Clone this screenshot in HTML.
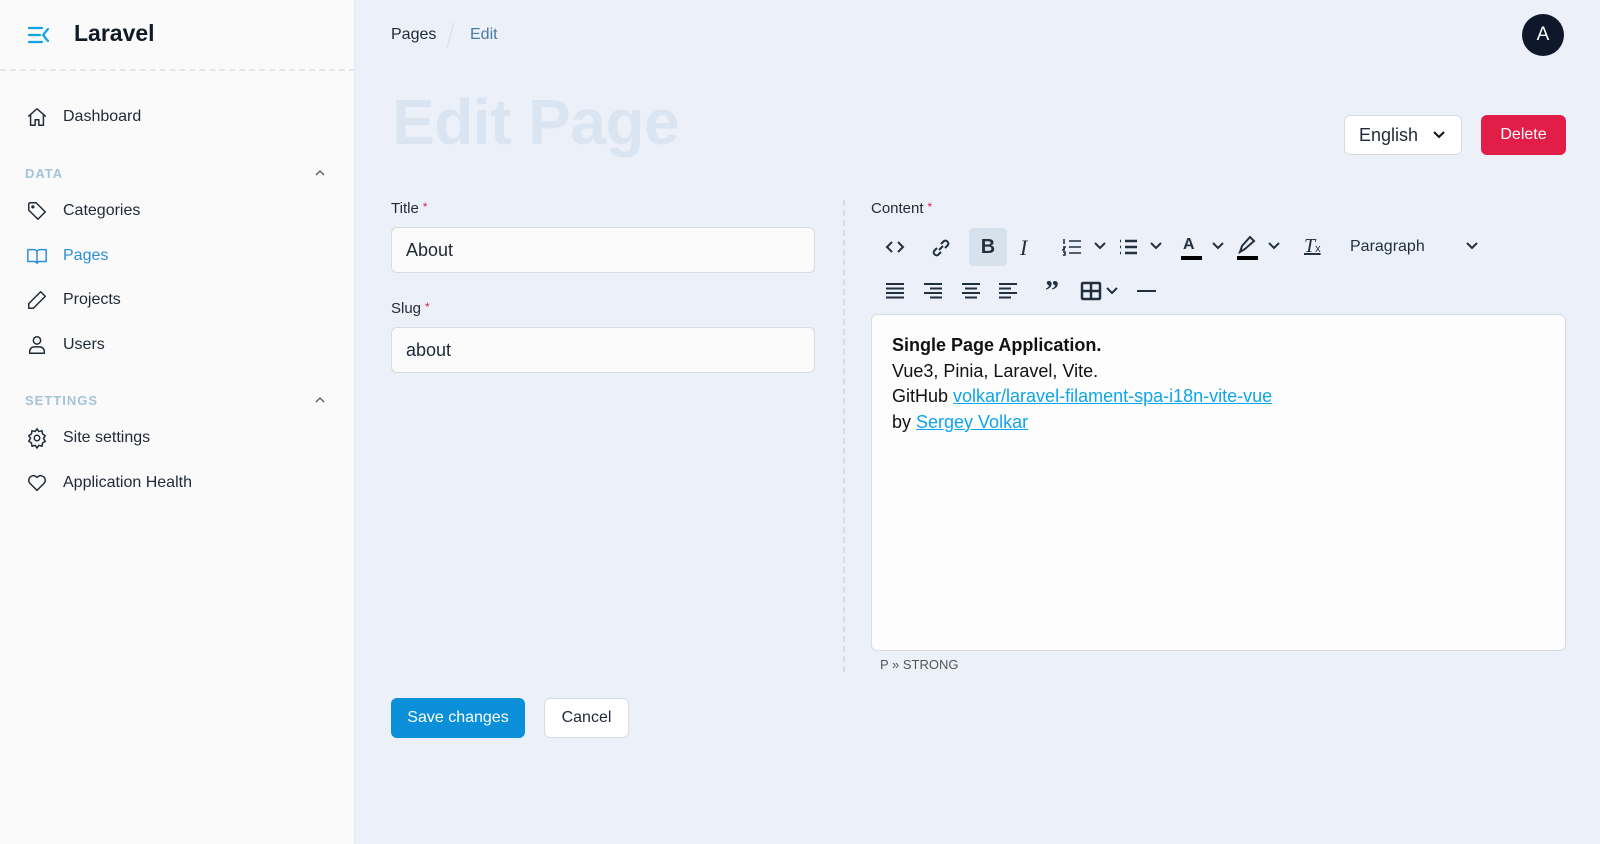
<!DOCTYPE html>
<html><head><meta charset="utf-8"><style>
*{box-sizing:border-box;margin:0;padding:0}
body{width:1600px;height:844px;overflow:hidden;font-family:"Liberation Sans",sans-serif;background:#ecf1f9;position:relative;color:#1f2937}
.sb{position:absolute;left:0;top:0;width:355px;height:844px;background:#fafafa;border-right:1px solid #e5e9f0}
.abs{position:absolute}
.nav{position:absolute;left:26px;display:flex;align-items:center;font-size:16px;color:#1f2937}
.nav svg{width:22px;height:22px;margin-right:15px;fill:none;stroke:#1f2937;stroke-width:1.6;stroke-linecap:round;stroke-linejoin:round}
.sec{position:absolute;left:25px;font-size:13px;font-weight:bold;letter-spacing:1px;color:#a5c3d8}
.chev{position:absolute;left:315px;width:10px;height:10px}
.inp{position:absolute;background:#fbfbfc;border:1px solid #d7dce3;border-radius:6px;font-size:18px;padding-left:14px;display:flex;align-items:center}
.lbl{position:absolute;font-size:15px}
.lbl b{color:#e11d48;font-weight:normal;font-size:12px;vertical-align:top;margin-left:4px}
.tb svg{position:absolute;fill:none;stroke:#222f3e;stroke-width:2}
</style></head><body>
<div class="sb">
 <svg class="abs" style="left:27px;top:25px" width="24" height="20" viewBox="0 0 24 20" fill="none" stroke="#0ea5e9" stroke-width="2.2" stroke-linecap="round"><path d="M2 3h13M2 10h11M2 17h13M21 4l-5 6 5 6"/></svg>
 <div class="abs" style="left:74px;top:20px;font-size:23px;font-weight:bold;color:#111827">Laravel</div>
 <div class="abs" style="left:0;top:69px;width:355px;border-top:2px dashed #e4e8ee"></div>
 <div class="nav" style="top:106px"><svg viewBox="0 0 24 24"><path d="M3 11l9-8 9 8M5 9v12h5v-6h4v6h5V9"/></svg>Dashboard</div>
 <div class="sec" style="top:166px">DATA</div>
 <svg class="chev" style="top:168px" viewBox="0 0 10 10" fill="none" stroke="#555" stroke-width="1.3"><path d="M1 7l4-4 4 4"/></svg>
 <div class="nav" style="top:200px"><svg viewBox="0 0 24 24"><path d="M3 4v7l10 10 8-8L11 3H4z"/><circle cx="7.5" cy="7.5" r="1"/></svg>Categories</div>
 <div class="nav" style="top:245px;color:#2b8ed8"><svg viewBox="0 0 24 24" style="stroke:#2b8ed8"><path d="M2 5h7a3 3 0 013 3v12a3 3 0 00-3-2H2zM22 5h-7a3 3 0 00-3 3v12a3 3 0 013-2h7z"/></svg>Pages</div>
 <div class="nav" style="top:289px"><svg viewBox="0 0 24 24"><path d="M16 3l5 5L8 21H3v-5z"/></svg>Projects</div>
 <div class="nav" style="top:334px"><svg viewBox="0 0 24 24"><circle cx="12" cy="7" r="4"/><path d="M4 21v-2a5 5 0 015-5h6a5 5 0 015 5v2z"/></svg>Users</div>
 <div class="sec" style="top:393px">SETTINGS</div>
 <svg class="chev" style="top:395px" viewBox="0 0 10 10" fill="none" stroke="#555" stroke-width="1.3"><path d="M1 7l4-4 4 4"/></svg>
 <div class="nav" style="top:427px"><svg viewBox="0 0 24 24"><circle cx="12" cy="12" r="3"/><path d="M12 2l2 3 3.5-1 .5 3.5 3 2-2 3 2 3-3 2-.5 3.5L14 20l-2 3-2-3-3.5 1-.5-3.5-3-2 2-3-2-3 3-2 .5-3.5L10 5z"/></svg>Site settings</div>
 <div class="nav" style="top:472px"><svg viewBox="0 0 24 24"><path d="M12 20l-8-8a5 5 0 017-7l1 1 1-1a5 5 0 017 7z"/></svg>Application Health</div>
</div>

<div class="abs" style="left:391px;top:26px;font-size:16px;color:#1f2937">Pages</div>
<div class="abs" style="left:450px;top:22px;width:1px;height:26px;background:#d5dde8;transform:rotate(15deg)"></div>
<div class="abs" style="left:470px;top:26px;font-size:16px;color:#4b7aa5">Edit</div>
<div class="abs" style="left:1522px;top:14px;width:42px;height:42px;border-radius:50%;background:#0f172a;color:#fff;font-size:19px;display:flex;align-items:center;justify-content:center">A</div>

<div class="abs" style="left:392px;top:85px;font-size:64px;font-weight:bold;color:#dbe5f1;letter-spacing:-0.5px">Edit Page</div>
<div class="abs" style="left:1344px;top:115px;width:118px;height:40px;background:#fff;border:1px solid #d7dce3;border-radius:6px;font-size:18px;padding-left:14px;display:flex;align-items:center">English
 <svg style="margin-left:14px" width="14" height="10" viewBox="0 0 14 10" fill="none" stroke="#111" stroke-width="2"><path d="M2 2l5 5 5-5"/></svg></div>
<div class="abs" style="left:1481px;top:115px;width:85px;height:40px;background:#e11d48;border-radius:6px;color:#fff;font-size:16px;display:flex;align-items:center;justify-content:center">Delete</div>

<div class="lbl" style="left:391px;top:200px">Title<b>*</b></div>
<div class="inp" style="left:391px;top:227px;width:424px;height:46px">About</div>
<div class="lbl" style="left:391px;top:300px">Slug<b>*</b></div>
<div class="inp" style="left:391px;top:327px;width:424px;height:46px">about</div>

<div class="abs" style="left:843px;top:200px;height:472px;border-left:2px dashed #d6dde7"></div>

<div class="lbl" style="left:871px;top:200px">Content<b>*</b></div>
<div class="tb">
 <svg style="left:885px;top:240px" width="20" height="14" viewBox="0 0 20 14"><path d="M7 2L2 7l5 5M13 2l5 5-5 5"/></svg>
 <svg style="left:930px;top:237px" width="22" height="22" viewBox="0 0 22 22"><path d="M9 13l4-4M7 11l-3 3a3 3 0 004 4l3-3M15 11l3-3a3 3 0 00-4-4l-3 3"/></svg>
 <div class="abs" style="left:969px;top:228px;width:38px;height:38px;background:#d6e1ec;border-radius:4px;font-weight:bold;font-size:20px;display:flex;align-items:center;justify-content:center;color:#222f3e">B</div>
 <div class="abs" style="left:1020px;top:235px;font-family:'Liberation Serif',serif;font-style:italic;font-size:22px;color:#222f3e">I</div>
 <svg style="left:1062px;top:238px" width="20" height="18" viewBox="0 0 20 18"><path d="M7 3h12M7 9h12M7 15h12M2 1v5M1 9h2l-2 3h2M1 14h2v3H1" stroke-width="1.6"/></svg>
 <svg style="left:1094px;top:242px" width="12" height="8" viewBox="0 0 12 8" stroke="#777" stroke-width="1.3"><path d="M1 1l5 5 5-5"/></svg>
 <svg style="left:1118px;top:238px" width="20" height="18" viewBox="0 0 20 18"><path d="M7 3h12M7 9h12M7 15h12M2 3h1M2 9h1M2 15h1" stroke-width="2.4"/></svg>
 <svg style="left:1150px;top:242px" width="12" height="8" viewBox="0 0 12 8" stroke="#777" stroke-width="1.3"><path d="M1 1l5 5 5-5"/></svg>
 <div class="abs" style="left:1183px;top:236px;font-size:16px;font-weight:bold;color:#222f3e">A</div>
 <div class="abs" style="left:1181px;top:256px;width:21px;height:4px;background:#000"></div>
 <svg style="left:1212px;top:242px" width="12" height="8" viewBox="0 0 12 8" stroke="#777" stroke-width="1.3"><path d="M1 1l5 5 5-5"/></svg>
 <svg style="left:1237px;top:236px" width="22" height="18" viewBox="0 0 22 18" style="fill:#222f3e;stroke:none"><path d="M3 16l2-6 8-9 4 4-9 8z"/></svg>
 <div class="abs" style="left:1237px;top:256px;width:21px;height:4px;background:#000"></div>
 <svg style="left:1268px;top:242px" width="12" height="8" viewBox="0 0 12 8" stroke="#777" stroke-width="1.3"><path d="M1 1l5 5 5-5"/></svg>
 <div class="abs" style="left:1304px;top:235px;font-family:'Liberation Serif',serif;font-style:italic;font-size:20px;color:#222f3e;text-decoration:underline">T<span style="font-size:11px;font-style:normal;font-family:'Liberation Sans'">x</span></div>
 <div class="abs" style="left:1350px;top:238px;font-size:16px;color:#222f3e">Paragraph</div>
 <svg style="left:1466px;top:242px" width="12" height="8" viewBox="0 0 12 8" stroke="#777" stroke-width="1.3"><path d="M1 1l5 5 5-5"/></svg>
 <svg style="left:885px;top:283px" width="20" height="16" viewBox="0 0 20 16"><path d="M1 1h18M1 5.5h18M1 10h18M1 14.5h18"/></svg>
 <svg style="left:923px;top:283px" width="20" height="16" viewBox="0 0 20 16"><path d="M1 1h18M7 5.5h12M1 10h18M7 14.5h12"/></svg>
 <svg style="left:961px;top:283px" width="20" height="16" viewBox="0 0 20 16"><path d="M1 1h18M4 5.5h12M1 10h18M4 14.5h12"/></svg>
 <svg style="left:998px;top:283px" width="20" height="16" viewBox="0 0 20 16"><path d="M1 1h18M1 5.5h12M1 10h18M1 14.5h12"/></svg>
 <div class="abs" style="left:1045px;top:276px;font-size:28px;font-weight:bold;color:#222f3e;font-family:'Liberation Serif',serif">”</div>
 <svg style="left:1080px;top:281px" width="22" height="20" viewBox="0 0 22 20"><rect x="2" y="2" width="18" height="16" rx="1" stroke-width="2.5"/><path d="M2 10h18M11 2v16" stroke-width="2.5"/></svg>
 <svg style="left:1106px;top:287px" width="12" height="8" viewBox="0 0 12 8" stroke="#777" stroke-width="1.3"><path d="M1 1l5 5 5-5"/></svg>
 <div class="abs" style="left:1137px;top:290px;width:19px;height:2px;background:#222f3e"></div>
</div>
<div class="abs" style="left:871px;top:314px;width:695px;height:337px;background:#fdfdfd;border:1px solid #d7dce3;border-radius:6px;padding:18px 20px;font-size:18px;line-height:25.5px;color:#111">
 <b>Single Page Application.</b><br>Vue3, Pinia, Laravel, Vite.<br>GitHub <span style="color:#0ea5e9;text-decoration:underline">volkar/laravel-filament-spa-i18n-vite-vue</span><br>by <span style="color:#0ea5e9;text-decoration:underline">Sergey Volkar</span>
</div>
<div class="abs" style="left:880px;top:657px;font-size:13px;color:#555">P » STRONG</div>

<div class="abs" style="left:391px;top:698px;width:134px;height:40px;background:#0b8fd9;border-radius:6px;color:#fff;font-size:16px;display:flex;align-items:center;justify-content:center">Save changes</div>
<div class="abs" style="left:544px;top:698px;width:85px;height:40px;background:#fff;border:1px solid #d7dce3;border-radius:6px;font-size:16px;display:flex;align-items:center;justify-content:center">Cancel</div>
</body></html>
